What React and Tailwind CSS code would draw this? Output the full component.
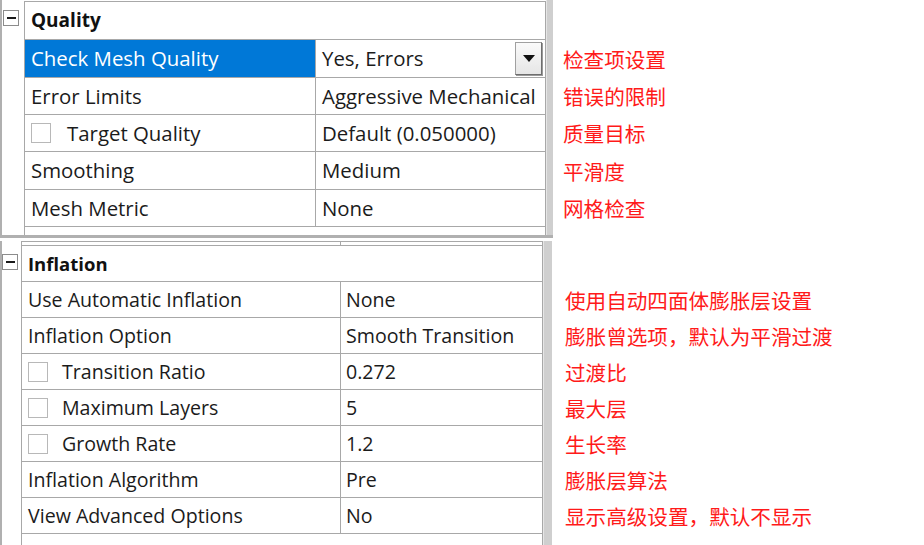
import React from "react";

const UI = { fontFamily: '"Open Sans", "Noto Sans", "Liberation Sans", sans-serif' };
const CJK = { fontFamily: '"Noto Sans CJK SC", "Noto Sans", sans-serif' };

function Minus() {
  return (
    <div className="w-[16px] h-[16px] border border-[#8c8c8c] bg-white flex items-center justify-center">
      <div className="w-[9px] h-[2px] bg-[#1a1a1a]" />
    </div>
  );
}

function Check() {
  return <div className="w-[20px] h-[20px] border border-[#b8b8b8] bg-white shrink-0" />;
}

function Dropdown() {
  return (
    <div className="w-[27px] h-[33px] border border-[#a0a0a0] border-b-[#6e6e6e] border-r-[#6e6e6e] bg-gradient-to-b from-[#fafafa] to-[#e6e6e6] flex items-center justify-center shadow-[1px_1px_0_#9a9a9a]">
      <svg width="12" height="7" viewBox="0 0 12 7">
        <polygon points="0,0 12,0 6,7" fill="#111" />
      </svg>
    </div>
  );
}

const quality = [
  { l: "Check Mesh Quality", v: "Yes, Errors", sel: true, h: "h-[38px]" },
  { l: "Error Limits", v: "Aggressive Mechanical", h: "h-[37px]" },
  { l: "Target Quality", v: "Default (0.050000)", chk: true, h: "h-[37px]" },
  { l: "Smoothing", v: "Medium", h: "h-[38px]" },
  { l: "Mesh Metric", v: "None", h: "h-[37px]" },
];

const inflation = [
  { l: "Use Automatic Inflation", v: "None" },
  { l: "Inflation Option", v: "Smooth Transition" },
  { l: "Transition Ratio", v: "0.272", chk: true },
  { l: "Maximum Layers", v: "5", chk: true },
  { l: "Growth Rate", v: "1.2", chk: true },
  { l: "Inflation Algorithm", v: "Pre" },
  { l: "View Advanced Options", v: "No" },
];

const notes1 = ["检查项设置", "错误的限制", "质量目标", "平滑度", "网格检查"];
const notes2 = [
  "使用自动四面体膨胀层设置",
  "膨胀曾选项，默认为平滑过渡",
  "过渡比",
  "最大层",
  "生长率",
  "膨胀层算法",
  "显示高级设置，默认不显示",
];

export default function App() {
  return (
    <div className="w-[924px] h-[545px] bg-white overflow-hidden flex flex-col text-[#1b1b1b]" style={UI}>
      {/* Quality */}
      <div className="flex h-[238px] shrink-0">
        <div className="w-[553px] h-[238px] flex border-l-2 border-b-[3px] border-[#b0b0b0]">
          <div className="w-[22px] pt-[10px] pl-[1px]">
            <Minus />
          </div>
          <div className="flex-1 flex flex-col border-l border-t border-r border-[#a8a8a8] mt-[1px]">
            <div className="h-[38px] border-b border-[#a8a8a8] flex items-center pl-[6px] text-[19px] font-bold text-[#111]">
              Quality
            </div>
            {quality.map((r) => (
              <div key={r.l} className={`${r.h} flex border-b border-[#a8a8a8] text-[20.4px]`}>
                <div
                  className={`w-[291px] border-r border-[#a8a8a8] flex items-center pl-[6px] whitespace-nowrap ${
                    r.sel ? "bg-[#0078d7] text-white" : ""
                  }`}
                >
                  {r.chk ? (
                    <>
                      <Check />
                      <span className="ml-[16px]">{r.l}</span>
                    </>
                  ) : (
                    r.l
                  )}
                </div>
                <div className="flex-1 flex items-center pl-[6px] pr-[3px] justify-between overflow-hidden">
                  <span className="whitespace-nowrap">{r.v}</span>
                  {r.sel && <Dropdown />}
                </div>
              </div>
            ))}
            <div className="flex-1" />
          </div>
          <div className="w-[7px] bg-[#cfcfcf] border-l border-[#e6e6e6]" />
        </div>
        <div className="flex flex-col pl-[10px] pt-[40px] text-[20.6px] text-[#ff1a1a]" style={CJK}>
          {notes1.map((n, i) => (
            <div key={n} className={`${quality[i].h} flex items-center whitespace-nowrap`}>
              {n}
            </div>
          ))}
        </div>
      </div>

      <div className="h-[3px] shrink-0" />

      {/* Inflation */}
      <div className="flex flex-1">
        <div className="w-[552px] flex border-l-2 border-[#b0b0b0]">
          <div className="w-[19px] pt-[13px]">
            <Minus />
          </div>
          <div className="flex-1 flex flex-col border-l border-t border-r border-[#a8a8a8]">
            <div className="h-[4px] flex border-b border-[#a8a8a8]">
              <div className="w-[319px] border-r border-[#a8a8a8]" />
            </div>
            <div className="h-[36px] border-b border-[#a8a8a8] flex items-center pl-[6px] text-[18.5px] font-bold text-[#111]">
              Inflation
            </div>
            {inflation.map((r) => (
              <div key={r.l} className="h-[36px] flex border-b border-[#a8a8a8] text-[19.6px]">
                <div className="w-[319px] border-r border-[#a8a8a8] flex items-center pl-[6px] whitespace-nowrap">
                  {r.chk ? (
                    <>
                      <Check />
                      <span className="ml-[14px]">{r.l}</span>
                    </>
                  ) : (
                    r.l
                  )}
                </div>
                <div className="flex-1 flex items-center pl-[5px]">
                  <span className="whitespace-nowrap">{r.v}</span>
                </div>
              </div>
            ))}
            <div className="flex-1" />
          </div>
          <div className="w-[9px] bg-[#cfcfcf] border-l border-[#e6e6e6]" />
        </div>
        <div className="flex flex-col pl-[13px] pt-[41px] text-[20.6px] text-[#ff1a1a]" style={CJK}>
          {notes2.map((n) => (
            <div key={n} className="h-[36px] flex items-center whitespace-nowrap">
              {n}
            </div>
          ))}
        </div>
      </div>
    </div>
  );
}
